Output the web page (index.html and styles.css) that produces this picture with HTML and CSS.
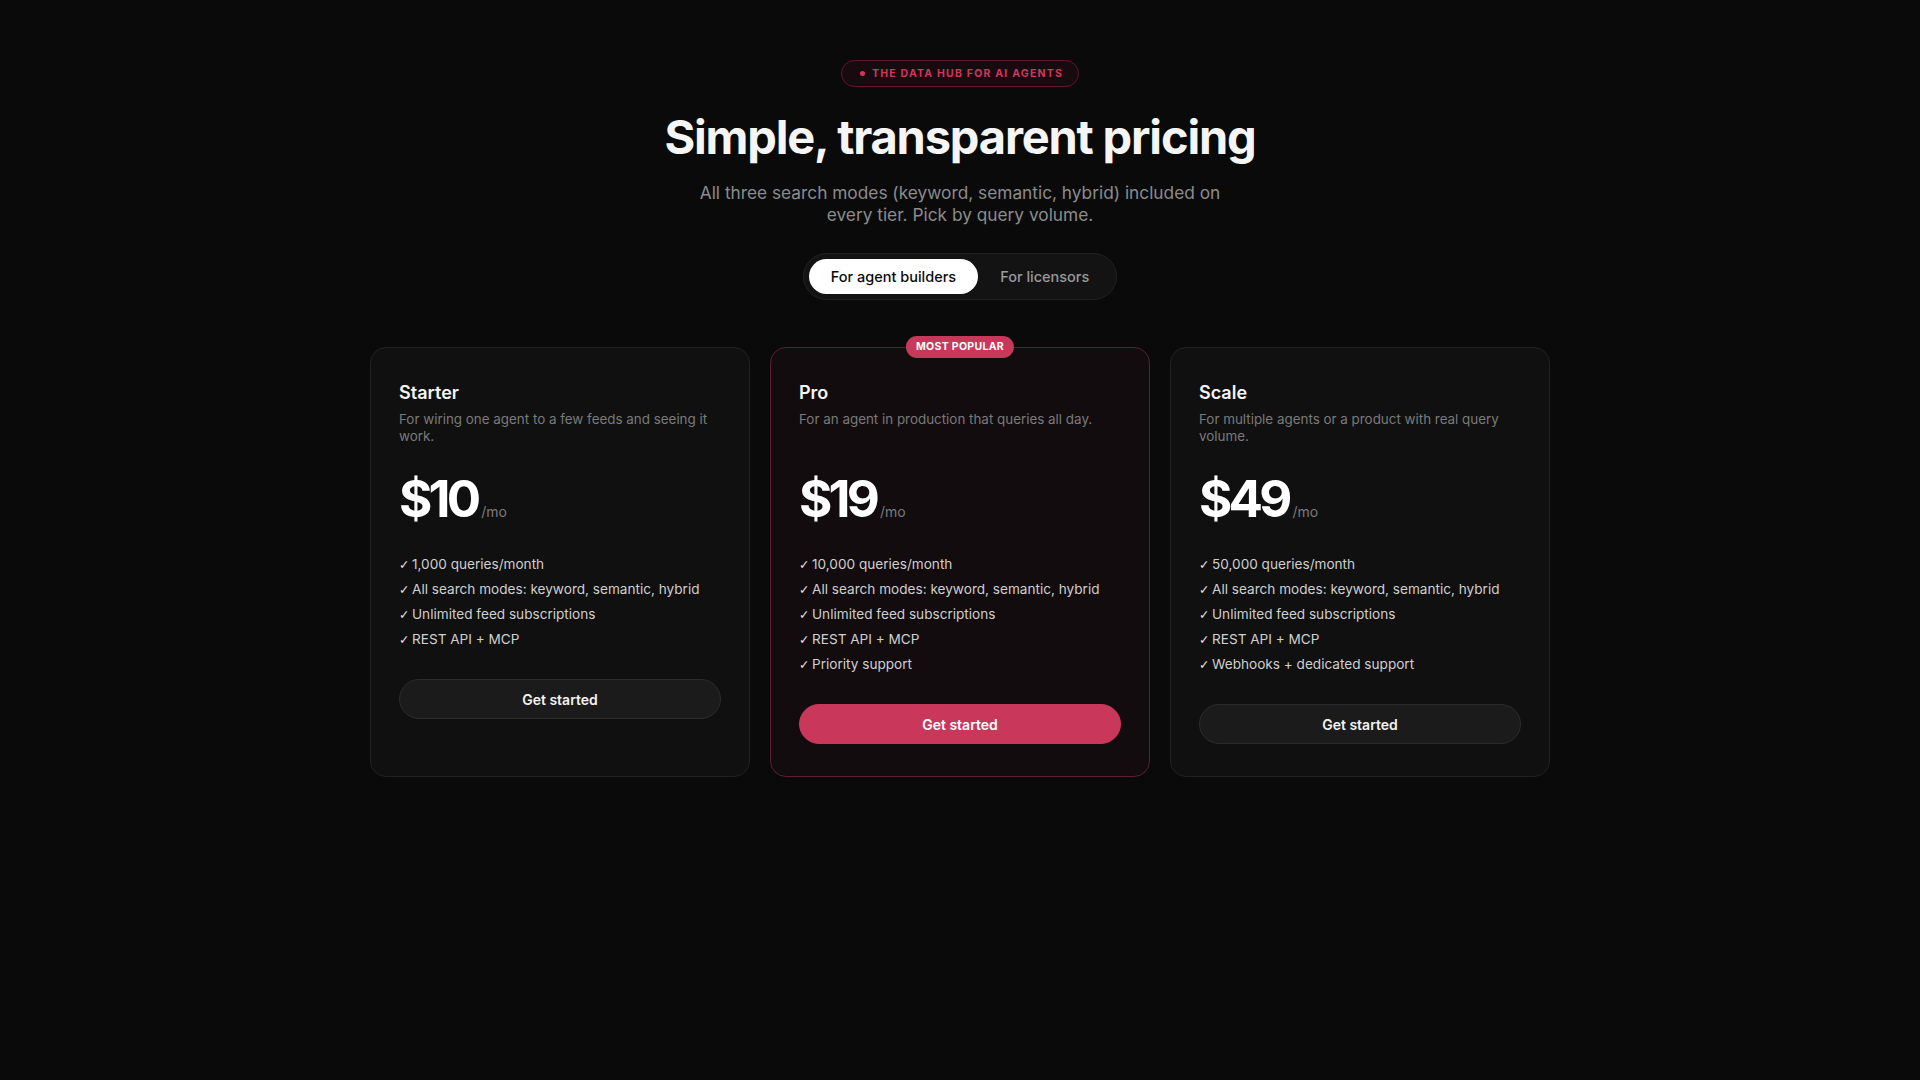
FILE: index.html
```html
<!DOCTYPE html>
<html lang="en">

<head>
    <meta charset="UTF-8">
    <meta name="viewport" content="width=device-width, initial-scale=1.0">
    <title>Pricing</title>
    <link rel="stylesheet" href="styles.css">
</head>

<body>
    <main class="pricing">
        <div class="eyebrow"><span class="dot"></span>THE DATA HUB FOR AI AGENTS</div>
        <h1>Simple, transparent pricing</h1>
        <p class="lead">All three search modes (keyword, semantic, hybrid) included on every tier. Pick by query volume.</p>

        <div class="toggle">
            <button class="toggle-btn active">For agent builders</button>
            <button class="toggle-btn">For licensors</button>
        </div>

        <div class="plans">
            <div class="plan">
                <h3>Starter</h3>
                <p class="plan-desc">For wiring one agent to a few feeds and seeing it work.</p>
                <div class="price"><span class="amount">$10</span><span class="per">/mo</span></div>
                <ul class="features">
                    <li>1,000 queries/month</li>
                    <li>All search modes: keyword, semantic, hybrid</li>
                    <li>Unlimited feed subscriptions</li>
                    <li>REST API + MCP</li>
                </ul>
                <button class="plan-btn">Get started</button>
            </div>

            <div class="plan featured">
                <span class="popular">MOST POPULAR</span>
                <h3>Pro</h3>
                <p class="plan-desc">For an agent in production that queries all day.</p>
                <div class="price"><span class="amount">$19</span><span class="per">/mo</span></div>
                <ul class="features">
                    <li>10,000 queries/month</li>
                    <li>All search modes: keyword, semantic, hybrid</li>
                    <li>Unlimited feed subscriptions</li>
                    <li>REST API + MCP</li>
                    <li>Priority support</li>
                </ul>
                <button class="plan-btn primary">Get started</button>
            </div>

            <div class="plan">
                <h3>Scale</h3>
                <p class="plan-desc">For multiple agents or a product with real query volume.</p>
                <div class="price"><span class="amount">$49</span><span class="per">/mo</span></div>
                <ul class="features">
                    <li>50,000 queries/month</li>
                    <li>All search modes: keyword, semantic, hybrid</li>
                    <li>Unlimited feed subscriptions</li>
                    <li>REST API + MCP</li>
                    <li>Webhooks + dedicated support</li>
                </ul>
                <button class="plan-btn">Get started</button>
            </div>
        </div>
    </main>
</body>

</html>
```

FILE: styles.css
```css
* {
    margin: 0;
    padding: 0;
    box-sizing: border-box;
    font-family: 'Inter', 'Open Sans', sans-serif;
    list-style: none;
    border: none;
}

body {
    background-color: #0a0a0a;
    color: #f2f2f2;
    min-height: 100vh;
}

.pricing {
    display: flex;
    flex-direction: column;
    align-items: center;
    padding: 60px 0 80px;
}

/* top label */
.eyebrow {
    display: flex;
    align-items: center;
    gap: 7px;
    height: 27px;
    padding: 0 15px 0 18px;
    border: 1px solid #5e1a2c;
    border-radius: 999px;
    background-color: #190a0f;
    color: #d0365d;
    font-size: 10.5px;
    font-weight: 700;
    letter-spacing: 0.115em;
}

.eyebrow .dot {
    width: 5px;
    height: 5px;
    border-radius: 50%;
    background-color: #d0365d;
}

h1 {
    margin-top: 22px;
    font-size: 47px;
    line-height: 1.2;
    font-weight: 700;
    letter-spacing: -0.025em;
    color: #f5f5f5;
}

.lead {
    margin-top: 17px;
    max-width: 540px;
    text-align: center;
    font-size: 17.3px;
    line-height: 22px;
    color: #8c8c8c;
}

/* audience switch */
.toggle {
    display: flex;
    margin-top: 27px;
    padding: 5px;
    border: 1px solid #222;
    border-radius: 999px;
    background-color: #131313;
}

.toggle-btn {
    height: 35px;
    padding: 0 22px;
    border-radius: 999px;
    background: transparent;
    color: #9a9a9a;
    font-size: 14.5px;
    font-weight: 500;
    cursor: pointer;
}

.toggle-btn.active {
    background-color: #ffffff;
    color: #0a0a0a;
}

/* plan cards */
.plans {
    display: grid;
    grid-template-columns: repeat(3, 1fr);
    gap: 20px;
    width: 1180px;
    margin-top: 47px;
}

.plan {
    position: relative;
    display: flex;
    flex-direction: column;
    align-items: flex-start;
    padding: 33px 28px 32px;
    border: 1px solid #222;
    border-radius: 16px;
    background-color: #101010;
}

.plan.featured {
    border-color: #5c1f32;
    background-color: #120c0e;
}

.popular {
    position: absolute;
    top: -12px;
    left: 50%;
    transform: translateX(-50%);
    height: 22px;
    padding: 0 10px;
    border-radius: 999px;
    background-color: #c9375b;
    color: #fff;
    font-size: 10.5px;
    font-weight: 700;
    line-height: 22px;
    letter-spacing: 0.03em;
    white-space: nowrap;
}

.plan h3 {
    font-size: 18px;
    line-height: 24px;
    font-weight: 600;
    color: #f5f5f5;
}

.plan-desc {
    margin-top: 6px;
    min-height: 34px;
    font-size: 13.4px;
    line-height: 17px;
    color: #7a7a7a;
}

.price {
    display: flex;
    align-items: baseline;
    gap: 4px;
    margin-top: 28px;
}

.amount {
    font-size: 51px;
    line-height: 1;
    font-weight: 700;
    letter-spacing: -0.075em;
    color: #fff;
}

.per {
    font-size: 14px;
    color: #7a7a7a;
}

.features {
    margin-top: 30px;
}

.features li {
    font-size: 13.6px;
    line-height: 21px;
    margin-bottom: 4px;
    color: #cfcfcf;
}

/* check mark in front of every feature */
.features li::before {
    content: '\2713';
    display: inline-block;
    width: 13px;
    font-family: 'DejaVu Sans', sans-serif;
    font-size: 12.5px;
    line-height: 1;
    color: #e6e6e6;
}

.features li:last-child {
    margin-bottom: 0;
}

.plan-btn {
    width: 100%;
    height: 40px;
    margin-top: 29px;
    border: 1px solid #2c2c2c;
    border-radius: 999px;
    background-color: #1b1b1b;
    color: #f2f2f2;
    font-size: 14px;
    font-weight: 600;
    cursor: pointer;
}

.plan-btn.primary {
    border-color: #c9375b;
    background-color: #c9375b;
    color: #fff;
}
```
